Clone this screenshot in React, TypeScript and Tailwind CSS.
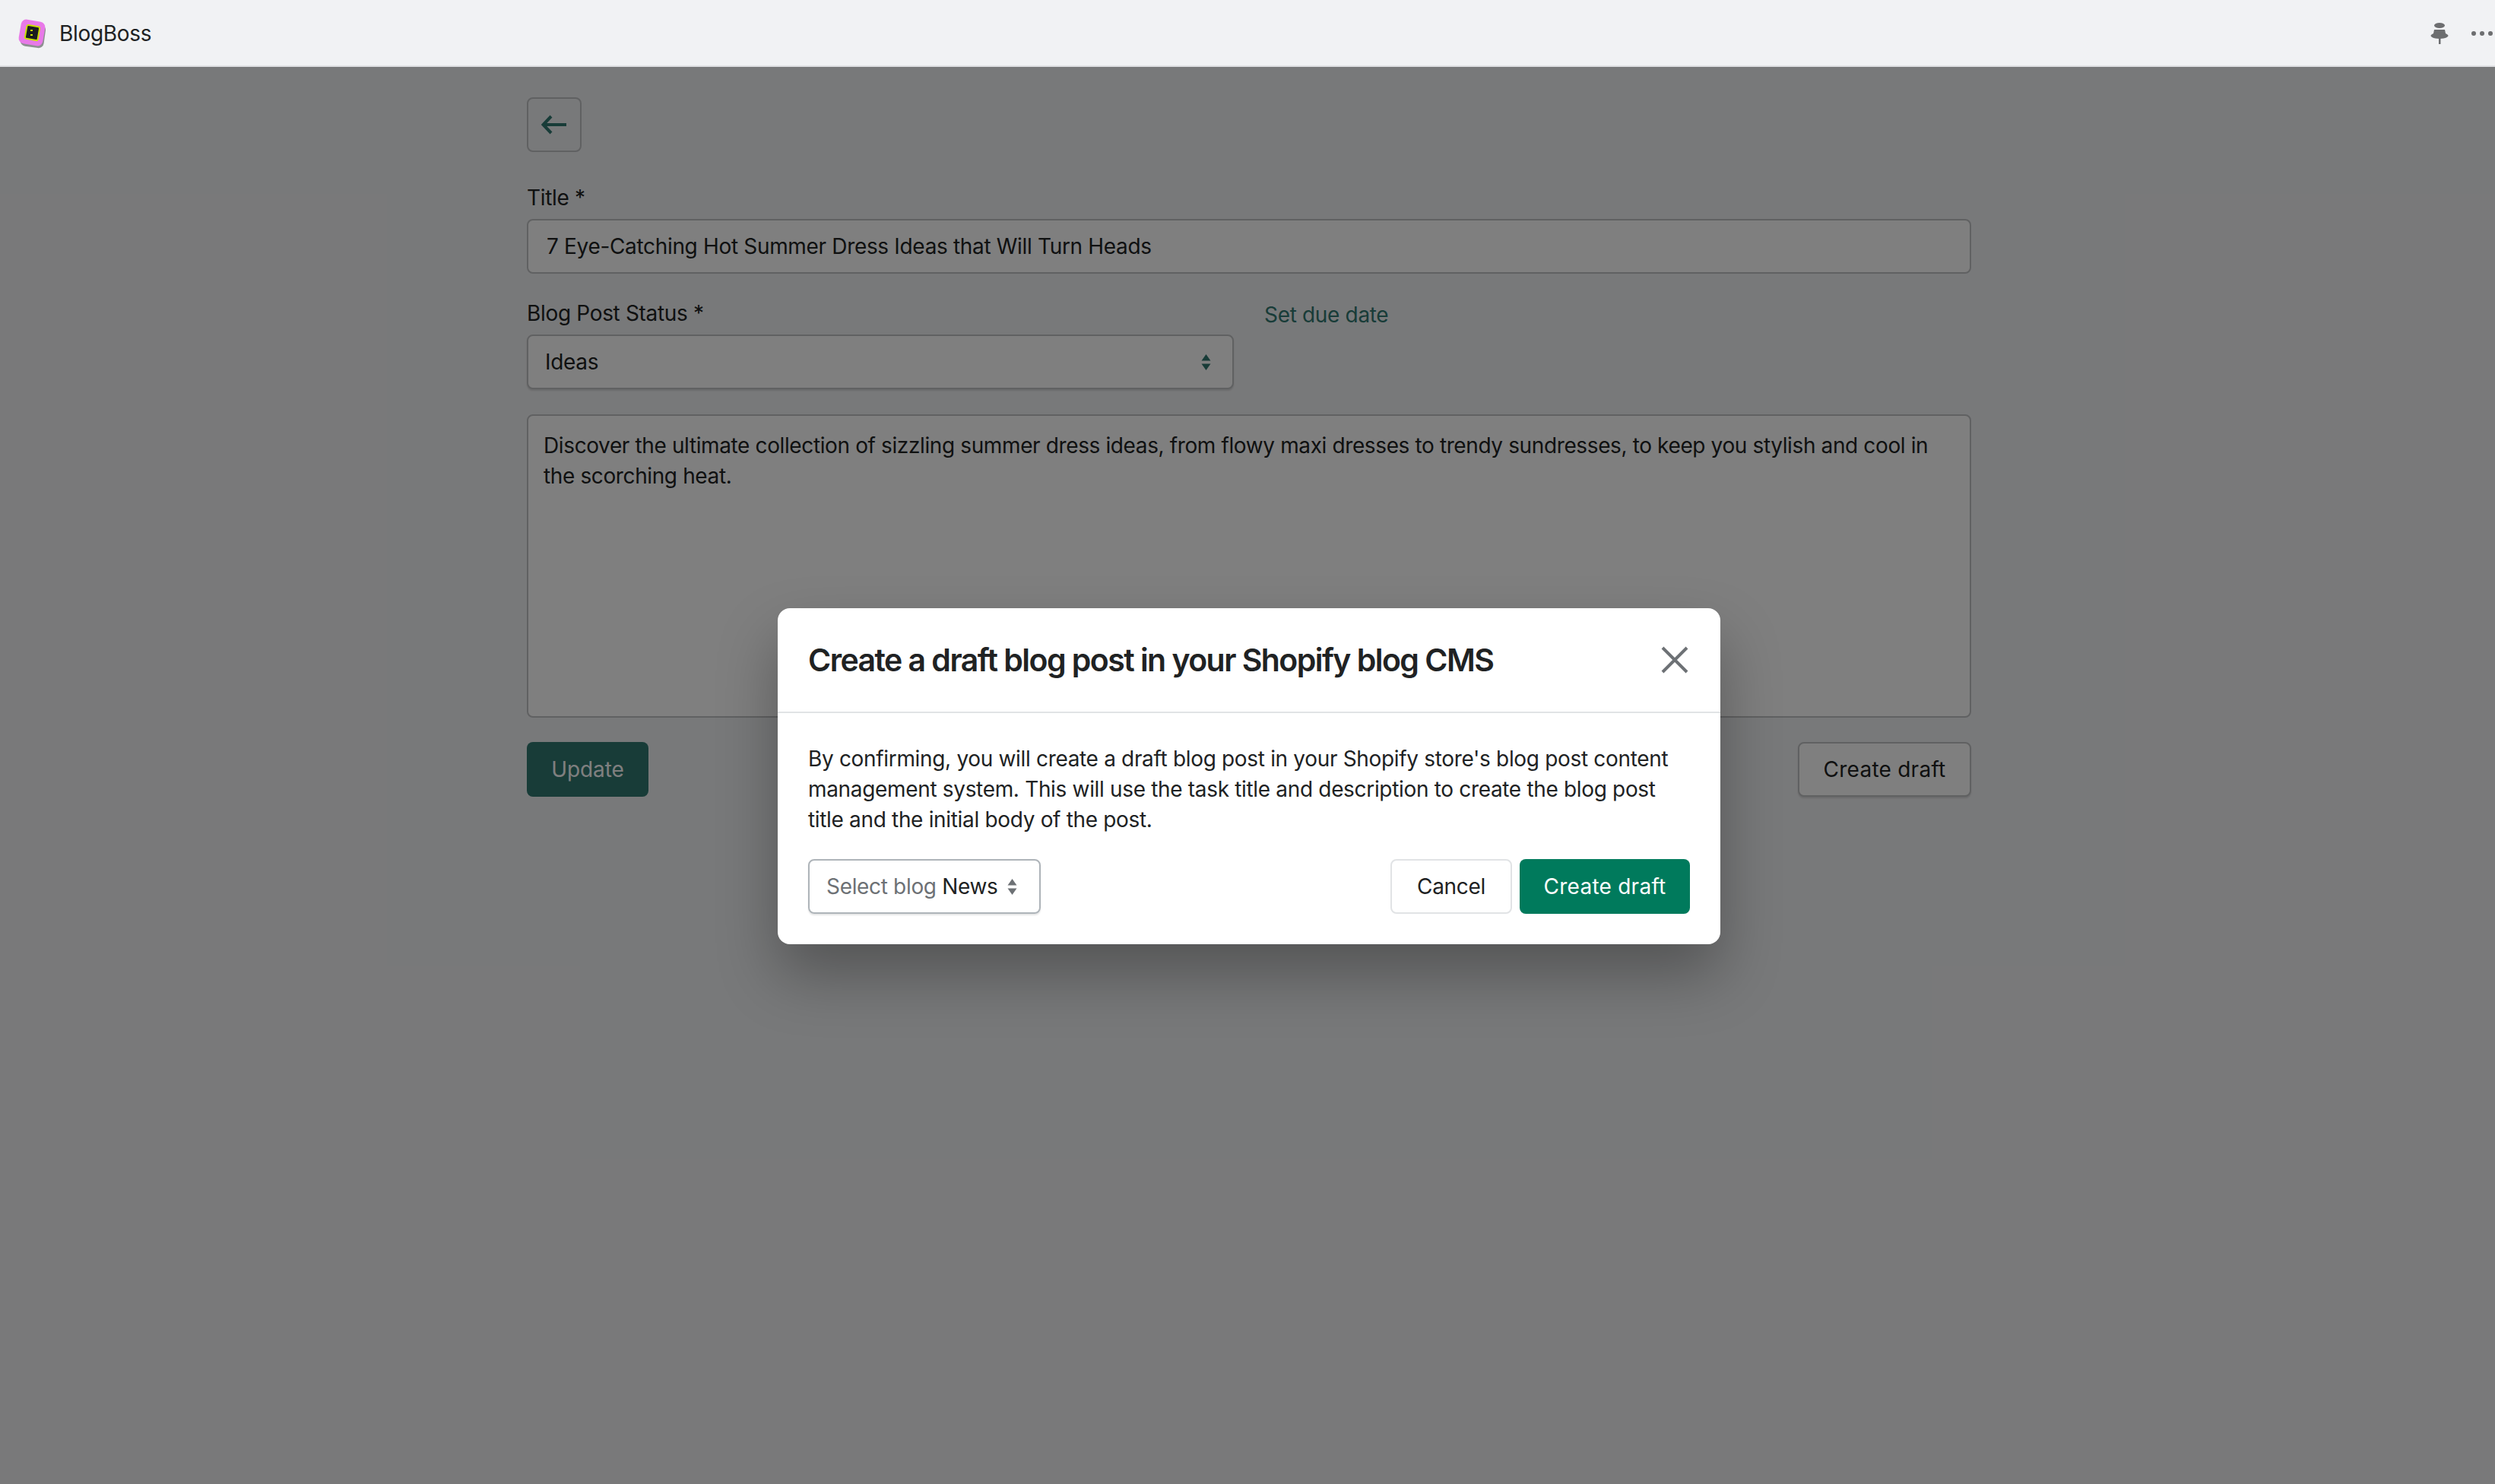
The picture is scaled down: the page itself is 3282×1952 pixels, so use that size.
import React from 'react';

const Logo = () => (
  <svg width="40" height="40" viewBox="0 0 40 40">
    <rect x="5" y="7" width="31" height="31" rx="7" fill="#8f8f92" transform="rotate(8 20 22)" />
    <rect x="3" y="3" width="32" height="32" rx="7" fill="#e879e8" transform="rotate(10 19 19)" />
    <rect x="11" y="10" width="17" height="18" rx="2" fill="#1a1c1e" stroke="#c8e000" strokeWidth="2" transform="rotate(10 19 19)" />
    <rect x="17" y="15" width="3" height="2" fill="#c8e000" />
    <rect x="17" y="21" width="3" height="2" fill="#c8e000" />
  </svg>
);

const Pin = () => (
  <svg width="24" height="30" viewBox="0 0 24 30" fill="#6d6e70">
    <ellipse cx="12" cy="4.500" rx="7" ry="3.500" />
    <path d="M5 10h14l1 5c2 1 3.500 2 3.500 3s-3 4-11.500 4S.5 19 .5 18s1.500-2 3.500-3z" />
    <rect x="11" y="21" width="2.500" height="8" />
  </svg>
);

const UpDown = ({ color }: { color: string }) => (
  <svg width="13" height="21" viewBox="0 0 13 21" fill={color}>
    <path d="M6.500 0l6 8.500H.5z" />
    <path d="M6.500 21L.5 12.500h12z" />
  </svg>
);

const fieldClass = 'rounded-[8px] border-2 border-[#c0c2c4] bg-white';

const App: React.FC = () => {
  return (
    <div className="relative h-[1952px] w-[3282px] overflow-hidden bg-[#f1f2f4] font-['Inter','Liberation_Sans',sans-serif] text-[28px] tracking-[-0.33px] text-[#202223]">
      <header className="flex h-[88px] items-center justify-between border-b-2 border-[#dfe0e3] pl-[23px] pr-[3px] pt-[2px]">
        <div className="flex items-center gap-[15px]">
          <Logo />
          <span>BlogBoss</span>
        </div>
        <div className="flex items-center gap-[30px]">
          <Pin />
          <div className="flex gap-[5px]">
            <span className="size-[6px] rounded-full bg-[#6d6e70]" />
            <span className="size-[6px] rounded-full bg-[#6d6e70]" />
            <span className="size-[6px] rounded-full bg-[#6d6e70]" />
          </div>
        </div>
      </header>

      <main className="ml-[693px] w-[1900px] pt-[40px]">
        <button className="flex size-[72px] items-center justify-center rounded-[8px] border-2 border-[#c0c2c4]">
          <svg width="34" height="26" viewBox="0 0 34 26" fill="none" stroke="#307871" strokeWidth="4">
            <path d="M33 13H3M13 2L2.500 13 13 24" />
          </svg>
        </button>

        <label className="mt-[40px] mb-[8px] block leading-[40px]">Title *</label>
        <div className={`${fieldClass} flex h-[72px] items-center pl-[24px]`}>7 Eye-Catching Hot Summer Dress Ideas that Will Turn Heads</div>

        <div className="mt-[32px] flex gap-[40px]">
          <div className="w-[930px]">
            <label className="mb-[8px] block leading-[40px]">Blog Post Status *</label>
            <div className={`${fieldClass} flex h-[72px] items-center justify-between pl-[22px] pr-[28px] shadow-[0_2px_2px_rgba(0,0,0,0.12)]`}>
              <span>Ideas</span>
              <UpDown color="#307871" />
            </div>
          </div>
          <a className="mt-[2px] leading-[40px] text-[#307871]">Set due date</a>
        </div>

        <div className={`${fieldClass} mt-[33px] h-[399px] px-[20px] pt-[19px] leading-[40px] tracking-[-0.38px]`}>
          Discover the ultimate collection of sizzling summer dress ideas, from flowy maxi dresses to trendy sundresses, to keep you stylish and cool in the scorching heat.
        </div>

        <div className="mt-[32px] flex justify-between">
          <button className="h-[72px] w-[160px] rounded-[8px] bg-[#307871] tracking-[-0.1px] text-white">Update</button>
          <button className={`${fieldClass} h-[72px] w-[228px] tracking-[0.25px] shadow-[0_2px_2px_rgba(0,0,0,0.12)]`}>Create draft</button>
        </div>
      </main>

      {/* dim layer sits under the top bar, modal on top of it */}
      <div className="absolute inset-x-0 bottom-0 top-[88px] bg-black/50" />

      <div className="absolute left-[1023px] top-[800px] w-[1240px] rounded-[16px] bg-white shadow-[0_40px_80px_rgba(0,0,0,0.3)]">
        <div className="flex h-[138px] items-center justify-between border-b-2 border-[#e1e3e5] px-[40px]">
          <h2 className="pt-[1px] text-[41px] font-semibold tracking-[-1.55px]">Create a draft blog post in your Shopify blog CMS</h2>
          <svg width="36" height="36" viewBox="0 0 36 36" stroke="#6d7175" strokeWidth="4" fill="none" className="mr-[2px]">
            <path d="M2 2l32 32M34 2L2 34" />
          </svg>
        </div>
        <div className="p-[40px]">
          <p className="leading-[40px]">
            By confirming, you will create a draft blog post in your Shopify store's blog post content management system. This will use the task title and description to create the blog post title and the initial body of the post.
          </p>
          <div className="mt-[32px] flex items-center justify-between">
            <div className="flex h-[72px] w-[306px] items-center gap-[12px] rounded-[8px] border-2 border-[#aeb4b9] pl-[22px] shadow-[0_2px_2px_rgba(0,0,0,0.1)]">
              <span className="text-[#6d7175]">Select blog <span className="text-[#202223]">News</span></span>
              <UpDown color="#6d7175" />
            </div>
            <div className="flex gap-[10px]">
              <button className="h-[72px] w-[160px] rounded-[8px] border-2 border-[#e1e3e5]">Cancel</button>
              <button className="h-[72px] w-[224px] rounded-[8px] bg-[#007a5c] tracking-[0.25px] text-white">Create draft</button>
            </div>
          </div>
        </div>
      </div>
    </div>
  );
};

export default App;
